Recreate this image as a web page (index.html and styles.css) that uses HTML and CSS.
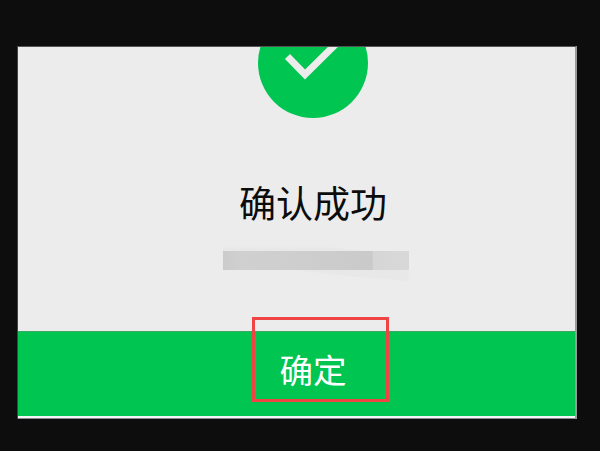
FILE: index.html
```html
<!DOCTYPE html>
<html lang="zh-CN">
<head>
<meta charset="utf-8">
<title>确认成功</title>
<link rel="stylesheet" href="styles.css">
</head>
<body>
<main class="screen">
  <section class="content">
    <div class="badge">
      <svg class="check" viewBox="0 0 110 110" aria-hidden="true">
        <path d="M29.5 48.5 L47 66.5 L88 26" />
      </svg>
    </div>
    <h1 class="title">确认成功</h1>
    <div class="masked">
      <div class="masked-halo"></div>
      <div class="masked-bar"></div>
    </div>
  </section>
  <button class="confirm">确定</button>
  <div class="annotation"></div>
</main>
</body>
</html>
```
FILE: styles.css
```css
html, body {
  margin: 0;
  padding: 0;
  height: 100%;
  background: #0d0d0d;
}
body {
  width: 600px;
  height: 451px;
  overflow: hidden;
  padding: 46px 23px 32px 17px;
  box-sizing: border-box;
  font-family: "Noto Sans CJK SC", "Noto Sans", sans-serif;
}
.screen {
  position: relative;
  height: 373px;
  border-left: 1px solid #444;
  border-right: 2px solid #999;
  border-top: 1px solid #555;
  box-sizing: border-box;
  background: #ececec;
  display: flex;
  flex-direction: column;
}
.content {
  height: 284px;
  padding-left: 30px;
  box-sizing: border-box;
  overflow: hidden;
  display: flex;
  flex-direction: column;
  align-items: center;
  flex: none;
}
.badge {
  width: 110px;
  height: 110px;
  margin-top: -39px;
  margin-left: 2px;
  border-radius: 50%;
  background: #00c551;
  flex: none;
}
.check {
  display: block;
  width: 110px;
  height: 110px;
  fill: none;
  stroke: #ececec;
  stroke-width: 7;
}
.title {
  margin: 58px 0 0 3px;
  font-size: 37px;
  line-height: 52px;
  font-weight: 400;
  color: #0c0c0c;
}
.masked {
  position: relative;
  width: 186px;
  height: 38px;
  margin: 15px 0 0 8px;
}
.masked-halo {
  position: absolute;
  left: 0;
  top: 0;
  width: 186px;
  height: 38px;
  background: #e8e8e8;
  clip-path: polygon(0 12%, 60% 12%, 100% 36%, 100% 100%, 70% 88%, 40% 72%, 0 72%);
}
.masked-bar {
  position: absolute;
  left: 0;
  top: 8px;
  width: 186px;
  height: 19px;
  background: linear-gradient(90deg, #cbcbcb 0, #d0d0d0 10%, #cecece 40%, #cacaca 80%, #d6d6d6 81%, #d8d8d8 100%);
}
.confirm {
  flex: none;
  width: 100%;
  height: 85px;
  margin: 0;
  padding: 0 0 10px 33px;
  border: none;
  border-top: 1px solid #3aa863;
  background: #00c551;
  color: #fff;
  font-family: inherit;
  font-size: 33.5px;
  line-height: 1;
  font-weight: 400;
}
.screen::after {
  content: "";
  display: block;
  flex: 1;
  background: #f4f4f4;
  border-bottom: 1px solid #8a8a92;
}
.annotation {
  position: absolute;
  left: 234px;
  top: 270px;
  width: 137px;
  height: 85px;
  box-sizing: border-box;
  border: 3px solid #f04444;
}
```
